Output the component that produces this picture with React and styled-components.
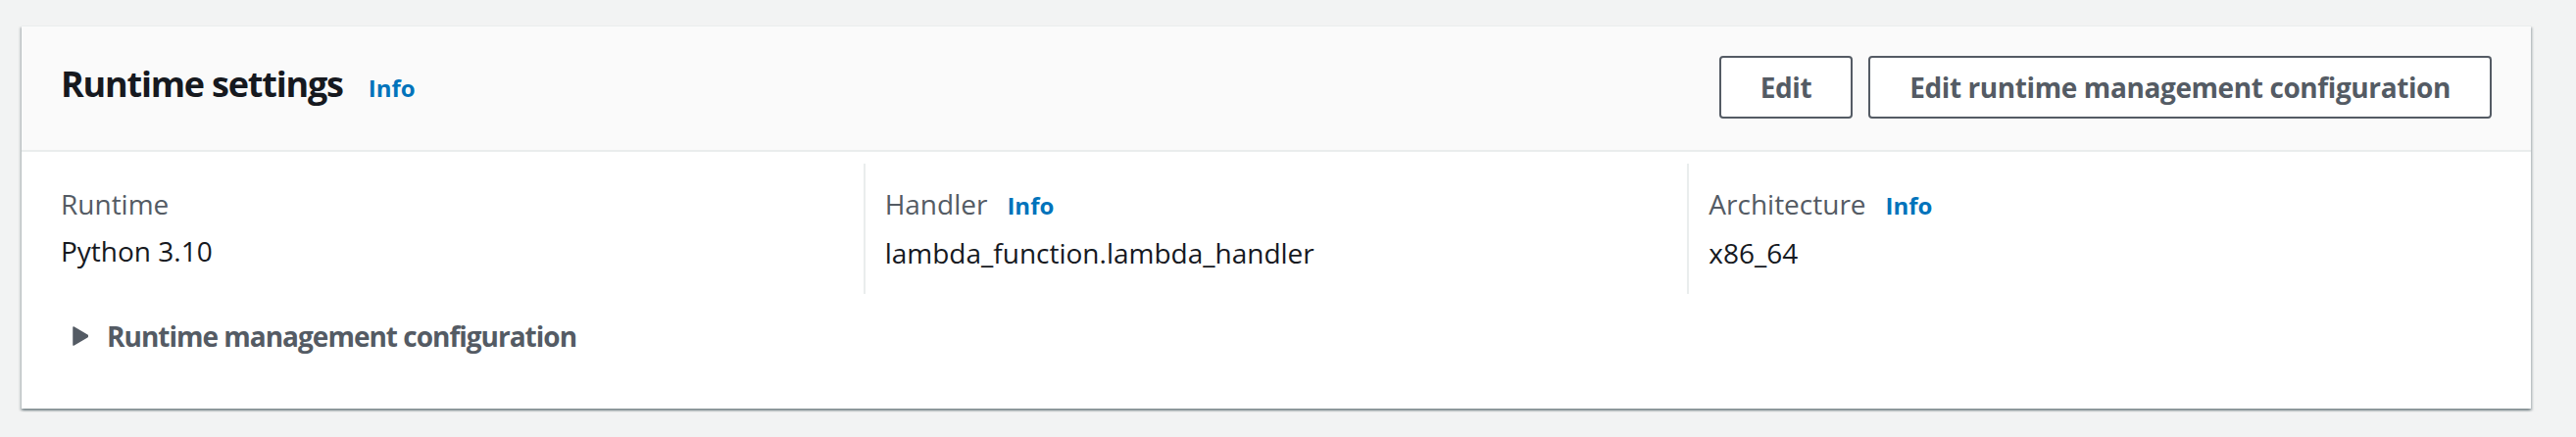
import React from 'react'
import styled, { createGlobalStyle } from 'styled-components';

const GlobalStyle = createGlobalStyle`
  body {
    margin: 0;
    background: #f2f3f3;
    font-family: "Open Sans", "Liberation Sans", sans-serif;
  }
`;

const Page = styled.div`
  padding: 26px 46px 28px 22px;
`;

const Card = styled.section`
  background: #ffffff;
  box-shadow: 0 2px 2px 0 rgba(0, 28, 36, 0.3), 2px 2px 2px 0 rgba(0, 28, 36, 0.15),
    -2px 2px 2px 0 rgba(0, 28, 36, 0.15);
  border-top: 1px solid #eaeded;
`;

const Header = styled.div`
  display: flex;
  align-items: center;
  justify-content: space-between;
  padding: 30px 40px 32px;
  background: #fafafa;
  border-bottom: 2px solid #eaeded;
`;

const TitleRow = styled.div`
  display: flex;
  align-items: baseline;
  padding-bottom: 6px;
`;

const Title = styled.h2`
  margin: 0;
  font-size: 36px;
  line-height: 44px;
  font-weight: 700;
  color: #16191f;
  letter-spacing: -1.2px;
`;

const InfoLink = styled.a`
  margin-left: ${p => (p.big ? '26px' : '20px')};
  font-size: 24px;
  font-weight: 700;
  color: #0073bb;
  text-decoration: none;
`;

const Actions = styled.div`
  display: flex;
  gap: 16px;
`;

const Button = styled.button`
  height: 64px;
  padding: 0 40px;
  border: 2px solid #545b64;
  border-radius: 4px;
  background: #ffffff;
  color: #545b64;
  font-family: inherit;
  font-size: 28px;
  font-weight: 700;
  letter-spacing: -0.4px;
  cursor: pointer;
`;

const Body = styled.div`
  padding: 12px 40px 52px;
`;

const Columns = styled.div`
  display: grid;
  grid-template-columns: repeat(3, 1fr);
  margin: 0 -20px 0 -22px;
`;

const Column = styled.div`
  padding: 19px 20px 20px;
  border-left: 2px solid ${p => (p.first ? 'transparent' : '#eaeded')};
`;

const Label = styled.div`
  display: flex;
  align-items: baseline;
  font-size: 28px;
  line-height: 44px;
  color: #545b64;
`;

const Value = styled.div`
  margin-top: 4px;
  font-size: 28px;
  line-height: 44px;
  color: #16191f;
`;

const Expander = styled.div`
  display: flex;
  align-items: center;
  margin-top: 21px;
  font-size: 28px;
  line-height: 44px;
  font-weight: 700;
  color: #545b64;
  letter-spacing: -1px;
`;

const Caret = styled.span`
  display: flex;
  justify-content: center;
  width: 40px;
  margin-right: 7px;
`;

const settings = [
  { label: 'Runtime', value: 'Python 3.10' },
  { label: 'Handler', value: 'lambda_function.lambda_handler', info: true },
  { label: 'Architecture', value: 'x86_64', info: true },
];

function App() {
  return (
    <Page>
      <GlobalStyle />
      <Card>
        <Header>
          <TitleRow>
            <Title>Runtime settings</Title>
            <InfoLink big href="#">Info</InfoLink>
          </TitleRow>
          <Actions>
            <Button>Edit</Button>
            <Button>Edit runtime management configuration</Button>
          </Actions>
        </Header>
        <Body>
          <Columns>
            {settings.map((s, i) => (
              <Column key={s.label} first={i === 0}>
                <Label>
                  {s.label}
                  {s.info && <InfoLink href="#">Info</InfoLink>}
                </Label>
                <Value>{s.value}</Value>
              </Column>
            ))}
          </Columns>
          <Expander>
            <Caret>
              <svg width="16" height="20" viewBox="0 0 16 20">
                <path d="M1 1 L15 9.2 Q16 10 15 10.8 L1 19 Z" fill="#545b64" stroke="#545b64" strokeWidth="1.5" strokeLinejoin="round" />
              </svg>
            </Caret>
            Runtime management configuration
          </Expander>
        </Body>
      </Card>
    </Page>
  )
}

export default App
